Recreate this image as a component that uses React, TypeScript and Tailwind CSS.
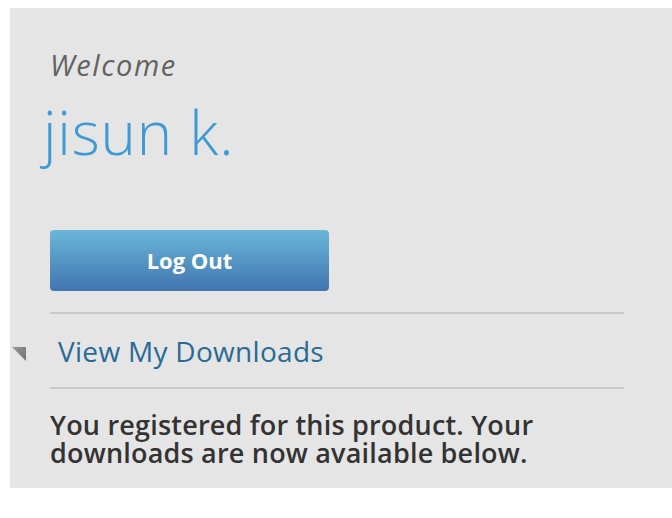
import React from "react";

export default function App() {
  return (
    <div className="w-[672px] h-[518px] bg-white pt-[8px] pl-[10px]" style={{ fontFamily: "'Open Sans', Lato, sans-serif" }}>
      <div className="bg-[#e5e5e5] w-[662px] h-[480px] pl-[40px] pt-[41px]">
        <div className="text-[29px] leading-[32px] italic tracking-[1.6px] text-[#626262]">Welcome</div>
        <div className="mt-[15px] text-[60px] leading-[72px] font-light tracking-[0.8px] text-[#3e9ad4] -ml-[7px]">jisun k.</div>
        <button className="mt-[62px] w-[279px] h-[61px] rounded-[4px] bg-gradient-to-b from-[#6ab7d9] to-[#4275af] text-white text-[22px] font-bold">
          Log Out
        </button>
        <div className="mt-[21px] w-[574px] h-[2px] bg-[#c9c9cd]" />
        <div className="relative h-[73px] pt-[21px]">
          <svg className="absolute left-[-38px] top-[33px]" width="14" height="14" viewBox="0 0 14 14">
            <defs>
              <linearGradient id="tg" x1="0" y1="0" x2="1" y2="1">
                <stop offset="0" stopColor="#9a9a9a" />
                <stop offset="1" stopColor="#6f6f6f" />
              </linearGradient>
            </defs>
            <polygon points="0,0 14,0 14,14" fill="url(#tg)" />
          </svg>
          <div className="ml-[8px] text-[28px] leading-[32px] tracking-[0.3px] text-[#296a96]">View My Downloads</div>
        </div>
        <div className="w-[574px] h-[2px] bg-[#c9c9cd]" />
        <p className="mt-[22px] w-[600px] text-[27px] leading-[28px] font-semibold tracking-[0.2px] text-[#333333]">
          You registered for this product. Your<br />downloads are now available below.
        </p>
      </div>
    </div>
  );
}
